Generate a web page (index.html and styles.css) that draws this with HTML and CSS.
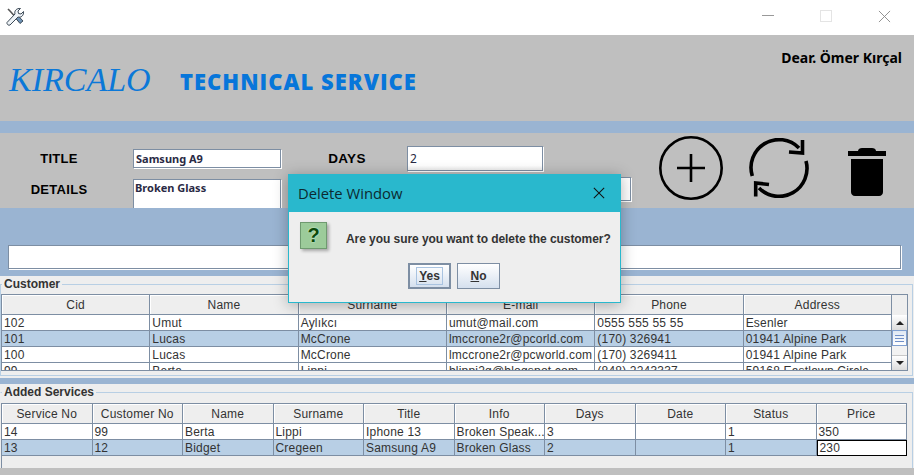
FILE: index.html
```html
<!DOCTYPE html>
<html lang="en">
<head>
<meta charset="UTF-8" />
<meta name="viewport" content="width=device-width, initial-scale=1" />
<title>Technical Service</title>
<link rel="stylesheet" href="styles.css">
</head>
<body>
  <div class="app">
    <div class="titlebar">
      <svg class="app-icon" width="20" height="20" viewBox="0 0 20 20">
        <path d="M3 3l2 2 9 10" fill="none" stroke="#555" stroke-width="1.6"/>
        <path d="M8.500 9.500l6.500 8 3-2.500-7-7.500z" fill="#6f93b5" stroke="#33404d" stroke-width="0.9"/>
        <path d="M2 16.500l8-8.500c-1-3 1.500-6 5.500-5.500l-2.500 2.500 0.500 2.500 2.500 0.500 2.500-2.500c0.500 4-2.500 6.500-5.500 5.500l-8 8c-1.500 1-3.500-1-3-2.500z" fill="#eef3f7" stroke="#3b4855" stroke-width="1"/>
      </svg>
      <div class="window-controls">
        <span class="win-min"></span>
        <span class="win-max"></span>
        <svg class="win-close" width="13" height="13" viewBox="0 0 14 14"><path d="M1 1l12 12M13 1L1 13" stroke="#8a8a8a" stroke-width="1" fill="none"/></svg>
      </div>
    </div>

    <header class="header">
      <span class="logo">KIRCALO</span>
      <span class="brand">TECHNICAL SERVICE</span>
      <span class="user">Dear. Ömer Kırçal</span>
    </header>

    <div class="band"></div>

    <section class="form-band">
      <div class="form-fields">
        <label class="form-label label-title">TITLE</label>
        <input class="field field-title" type="text" value="Samsung A9">
        <label class="form-label label-days">DAYS</label>
        <input class="field field-days" type="text" value="2">
        <label class="form-label label-details">DETAILS</label>
        <div class="field field-details">Broken Glass</div>
        <input class="field field-extra" type="text">
      </div>
      <div class="tools">
        <svg class="tool-add" width="64" height="64" viewBox="0 0 64 64">
          <circle cx="32" cy="32" r="30.700" fill="none" stroke="#000" stroke-width="2.600"/>
          <path d="M18 32h28M32 18v28" stroke="#000" stroke-width="2.600" fill="none"/>
        </svg>
        <svg class="tool-refresh" width="60" height="60" viewBox="0 0 60 60">
          <g fill="none" stroke="#000" stroke-width="3.600">
            <path d="M3.300 38A28 28 0 0 1 50 10"/>
            <path d="M40 14l13.500 1V2"/>
            <path d="M57 23A28 28 0 0 1 10 50"/>
            <path d="M20 46.500L6.700 45v13.500"/>
          </g>
        </svg>
        <svg class="tool-trash" width="38" height="49" viewBox="0 0 38 49">
          <path d="M0 4h10c0-2 2-3 4-3h10c2 0 4 1 4 3h10v5H0z" fill="#000"/>
          <path d="M3 12h32v33c0 2-1.500 4-4 4H7c-2.500 0-4-2-4-4z" fill="#000"/>
        </svg>
      </div>
    </section>

    <div class="search-band">
      <input class="field field-search" type="text">
    </div>

    <fieldset class="panel panel-customer">
      <legend>Customer</legend>
      <div class="table-frame">
        <div class="table-clip">
          <table class="grid">
            <thead>
              <tr><th>Cid</th><th>Name</th><th>Surname</th><th>E-mail</th><th>Phone</th><th>Address</th></tr>
            </thead>
            <tbody>
              <tr><td>102</td><td>Umut</td><td>Aylıkcı</td><td>umut@mail.com</td><td>0555 555 55 55</td><td>Esenler</td></tr>
              <tr class="selected"><td>101</td><td>Lucas</td><td>McCrone</td><td>lmccrone2r@pcorld.com</td><td>(170) 326941</td><td>01941 Alpine Park</td></tr>
              <tr><td>100</td><td>Lucas</td><td>McCrone</td><td>lmccrone2r@pcworld.com</td><td>(170) 3269411</td><td>01941 Alpine Park</td></tr>
              <tr><td>99</td><td>Berta</td><td>Lippi</td><td>blippi2g@blogspot.com</td><td>(848) 2243337</td><td>59168 Eastlawn Circle</td></tr>
            </tbody>
          </table>
        </div>
        <div class="scrollbar">
          <div class="scroll-corner"></div>
          <div class="scroll-btn"><span class="arrow-up"></span></div>
          <div class="scroll-thumb"><span></span><span></span><span></span></div>
          <div class="scroll-track"></div>
          <div class="scroll-btn"><span class="arrow-down"></span></div>
        </div>
      </div>
    </fieldset>

    <div class="band band-thin"></div>

    <fieldset class="panel panel-services">
      <legend>Added Services</legend>
      <div class="services-frame">
        <table class="grid">
          <thead>
            <tr><th>Service No</th><th>Customer No</th><th>Name</th><th>Surname</th><th>Title</th><th>Info</th><th>Days</th><th>Date</th><th>Status</th><th>Price</th></tr>
          </thead>
          <tbody>
            <tr><td>14</td><td>99</td><td>Berta</td><td>Lippi</td><td>Iphone 13</td><td>Broken Speak...</td><td>3</td><td></td><td>1</td><td>350</td></tr>
            <tr class="selected"><td>13</td><td>12</td><td>Bidget</td><td>Cregeen</td><td>Samsung A9</td><td>Broken Glass</td><td>2</td><td></td><td>1</td><td class="focused">230</td></tr>
          </tbody>
        </table>
      </div>
    </fieldset>

    <div class="footer-band"></div>

    <!-- confirm dialog -->
    <div class="dialog">
      <div class="dialog-title">
        <span>Delete Window</span>
        <svg width="12" height="12" viewBox="0 0 14 14"><path d="M1 1l12 12M13 1L1 13" stroke="#111" stroke-width="1.200" fill="none"/></svg>
      </div>
      <div class="dialog-body">
        <div class="question-icon">?</div>
        <p class="dialog-text">Are you sure you want to delete the customer?</p>
      </div>
      <div class="dialog-actions">
        <button class="btn btn-default"><span class="btn-focus"><u>Y</u>es</span></button>
        <button class="btn"><u>N</u>o</button>
      </div>
    </div>
  </div>
</body>
</html>
```

FILE: styles.css
```css
/* Reset & base */
* {
  box-sizing: border-box;
}
body {
  margin: 0;
  overflow: hidden;
  font-family: "Liberation Sans", Arial, sans-serif;
  font-size: 12px;
  color: #333;
}

.app {
  position: relative;
  width: 914px;
  height: 475px;
  overflow: hidden;
  background: #eee;
}

/* Window title bar */
.titlebar {
  display: flex;
  justify-content: space-between;
  height: 35px;
  background: #fff;
  padding: 6px 0 0 5px;
}
.window-controls {
  display: flex;
  align-items: flex-start;
  padding: 4px 23px 0 0;
}
.win-min {
  width: 12px;
  height: 1px;
  margin: 5px 46px 0 0;
  background: #999;
}
.win-max {
  width: 12px;
  height: 12px;
  margin-right: 46px;
  border: 1px solid #e4e4e4;
}

/* Header */
.header {
  display: flex;
  height: 86px;
  background: #bfbfbf;
  padding: 0 12px 0 9px;
}
.logo {
  width: 171px;
  margin-top: 25px;
  font-family: "Liberation Serif", serif;
  font-style: italic;
  font-size: 34px;
  line-height: 40px;
  color: #0b78d8;
}
.brand {
  margin-top: 31px;
  font-family: "Open Sans", sans-serif;
  font-weight: 800;
  font-size: 22px;
  line-height: 30px;
  letter-spacing: 1px;
  color: #0776da;
}
.user {
  margin: 14px 0 0 auto;
  font-family: "Noto Sans", sans-serif;
  font-weight: 700;
  font-size: 14px;
  line-height: 18px;
  color: #000;
}

.band {
  height: 12px;
  background: #9ab4d2;
}
.band-thin {
  height: 6px;
}

/* Form */
.form-band {
  display: flex;
  height: 75px;
  overflow: hidden;
  background: #bfbfbf;
}
.form-fields {
  display: grid;
  grid-template-columns: 118px 164px 125px 137px 88px;
  grid-template-rows: 26px 60px;
  row-gap: 6px;
  width: 659px;
  padding-top: 12px;
  align-items: center;
}
.form-label {
  font-weight: 700;
  font-size: 13px;
  letter-spacing: 0.3px;
  text-align: center;
  color: #000;
}
.label-title {
  grid-column: 1;
  grid-row: 1;
}
.label-days {
  grid-column: 3;
  grid-row: 1;
  padding-left: 5px;
  font-size: 13.500px;
}
.label-details {
  grid-column: 1;
  grid-row: 2;
  align-self: start;
  margin-top: 5px;
}
.field {
  display: block;
  margin: 0;
  padding: 0 2px;
  background: #fff;
  border: 1px solid #7d8ea3;
  border-radius: 0;
  box-shadow: 1px 1px 0 #fff;
  font-family: "Noto Sans", sans-serif;
  font-weight: 700;
  font-size: 11px;
  color: #2a2a44;
  outline: none;
}
.field-title {
  grid-column: 2;
  grid-row: 1;
  margin-left: 15px;
  width: 148px;
  height: 19px;
}
.field-days {
  grid-column: 4;
  grid-row: 1;
  width: 136px;
  height: 25px;
  font-weight: 400;
  font-size: 12px;
  background: linear-gradient(#fff 80%, #f0f0f0);
}
.field-details {
  grid-column: 2;
  grid-row: 2;
  align-self: start;
  margin: 2px 0 0 15px;
  padding: 0 1px;
  width: 148px;
  height: 50px;
  line-height: 15px;
}
.field-extra {
  grid-column: 4 / 6;
  grid-row: 2;
  align-self: start;
  width: 224px;
  height: 24px;
}

.tools {
  display: flex;
  align-items: center;
  height: 64px;
  margin-top: 3px;
}
.tools svg {
  display: block;
}
.tool-refresh {
  margin-left: 26px;
}
.tool-trash {
  margin-left: 39px;
  margin-top: 7px;
}

.search-band {
  height: 68px;
  padding: 37px 0 0 8px;
  background: #9ab4d2;
}
.field-search {
  width: 893px;
  height: 24px;
}

/* Titled panels */
.panel {
  width: 913px;
  min-width: 0;
  padding: 0;
  border: 1px solid #b8cfe4;
  background: #eee;
}
.panel legend {
  margin-left: 1px;
  padding: 0 2px;
  font-weight: 700;
  font-size: 12px;
  line-height: 14px;
  color: #333;
}
.panel-customer {
  height: 99px;
  margin: 1px 0 2px;
  padding-top: 3px;
}
.panel-services {
  height: 83px;
  margin: 1px 0 0;
  padding-top: 4px;
  border-bottom: 0;
  border-left-color: #eee;
}

.table-frame {
  display: flex;
  width: 907px;
  height: 77px;
  border: 1px solid #7d8ea3;
}
.table-clip {
  flex: none;
  width: 890px;
  overflow: hidden;
}
.services-frame {
  width: 906px;
  height: 65px;
  border-left: 1px solid #7d8ea3;
}

/* Tables */
.grid {
  width: 100%;
  table-layout: fixed;
  border-collapse: separate;
  border-spacing: 0;
  font-size: 12px;
  letter-spacing: 0.2px;
  color: #333;
}
.grid th {
  height: 20px;
  padding: 0;
  font-weight: 400;
  text-align: center;
  background: #eee;
  border-right: 1px solid #7d8ea3;
  border-bottom: 1px solid #7d8ea3;
  box-shadow: inset 1px 1px 0 #fff;
}
.grid td {
  height: 16px;
  padding: 0 1px 0 2px;
  overflow: hidden;
  white-space: nowrap;
  background: #fff;
  border-right: 1px solid #7d8ea3;
  border-bottom: 1px solid #7d8ea3;
}
.grid tr.selected td {
  background: #b8cfe5;
}
.grid tr.selected td.focused {
  background: #fff;
  border: 1px solid #000;
}
.services-frame .grid {
  border-top: 1px solid #7d8ea3;
}

/* Scrollbar */
.scrollbar {
  display: flex;
  flex: none;
  flex-direction: column;
  width: 15px;
  background: #eee;
}
.scroll-corner {
  height: 20px;
}
.scroll-btn {
  display: flex;
  align-items: center;
  justify-content: center;
  height: 15px;
  background: linear-gradient(#fff, #dcdcdc);
}
.scroll-btn:last-child {
  height: 14px;
}
.arrow-up,
.arrow-down {
  width: 0;
  height: 0;
  border-left: 4px solid transparent;
  border-right: 4px solid transparent;
}
.arrow-up {
  border-bottom: 4px solid #222;
}
.arrow-down {
  border-top: 4px solid #222;
}
.scroll-thumb {
  display: flex;
  flex-direction: column;
  justify-content: center;
  gap: 2px;
  height: 16px;
  padding: 0 2px;
  background: linear-gradient(#dfe8f3, #fff);
  border: 1px solid #7f9fd0;
}
.scroll-thumb span {
  height: 1px;
  background: #6f8fc8;
}
.scroll-track {
  height: 10px;
  background: #f2f2f2;
  border-bottom: 1px solid #c8c8c8;
}

.footer-band {
  height: 7px;
  background: #bfbfbf;
}

/* Confirm dialog */
.dialog {
  position: absolute;
  left: 288px;
  top: 174px;
  width: 333px;
  height: 129px;
  background: #eee;
  border: 1px solid #29b8cd;
  box-shadow: 0 2px 14px rgba(0,0,0,0.3);
}
.dialog-title {
  display: flex;
  align-items: center;
  justify-content: space-between;
  height: 37px;
  padding: 0 15px 2px 9px;
  background: #29b8cd;
  font-family: "Open Sans", sans-serif;
  font-size: 14.800px;
  color: #0c2a30;
}
.dialog-body {
  display: flex;
  align-items: flex-start;
  padding: 10px 0 0 11px;
}
.question-icon {
  width: 27px;
  height: 27px;
  background: #9ccb9a;
  border: 1px solid #6f9a70;
  box-shadow: 2px 2px 3px rgba(0,0,0,0.3);
  font-weight: 700;
  font-size: 20px;
  line-height: 24px;
  text-align: center;
  color: #0b4a0b;
  text-shadow: 0 0 2px #e6ffe6;
}
.dialog-text {
  margin: 10px 0 0 19px;
  font-weight: 700;
  font-size: 12px;
  line-height: 14px;
  letter-spacing: -0.06px;
  white-space: nowrap;
  color: #333;
}
.dialog-actions {
  display: flex;
  gap: 6px;
  padding: 14px 0 0 119px;
}
.btn {
  width: 43px;
  height: 26px;
  padding: 0;
  background: linear-gradient(#fff, #d5e0ee);
  border: 1px solid #7d8ea3;
  font-family: "Liberation Sans", sans-serif;
  font-weight: 700;
  font-size: 12px;
  color: #333;
}
.btn-default {
  border-width: 2px;
}
.btn-focus {
  padding: 1px 2px;
  border: 1px solid #a9c3e0;
}
```
